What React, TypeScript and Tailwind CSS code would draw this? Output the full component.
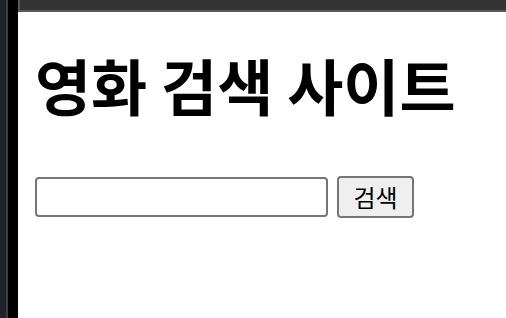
export default function App() {
  return (
    <div className="flex h-[318px] w-[506px] overflow-hidden bg-white">
      {/* left editor strip */}
      <div className="flex h-full shrink-0">
        <div className="h-full w-[6px] bg-[#1f2228]" />
        <div className="h-full w-[2px] bg-[#3a3d42]" />
        <div className="h-full w-[10px] bg-black" />
      </div>
      <div className="flex min-w-0 flex-1 flex-col">
        {/* top bar */}
        <div className="flex h-[12px] shrink-0">
          <div className="h-full w-[2px] bg-[#5a5a5a]" />
          <div className="flex flex-1 flex-col">
            <div className="h-[10px] bg-[#333333]" />
            <div className="h-[2px] bg-[#5a5a5a]" />
          </div>
        </div>
        <div className="px-[17px] font-['Noto_Sans_CJK_KR',sans-serif] text-black">
          <h1 className="mt-[36px] text-[61px] leading-[73px] font-bold whitespace-nowrap">영화 검색 사이트</h1>
          <div className="mt-[55px] flex items-center gap-[9px]">
            <input
              type="text"
              className="h-[40px] w-[293px] rounded-[4px] border-2 border-[#767676] bg-white px-2 outline-none"
            />
            <button className="h-[42px] w-[77px] rounded-[4px] border-2 border-[#767676] bg-[#efefef] text-[24px] leading-none font-normal">
              검색
            </button>
          </div>
        </div>
      </div>
    </div>
  );
}
